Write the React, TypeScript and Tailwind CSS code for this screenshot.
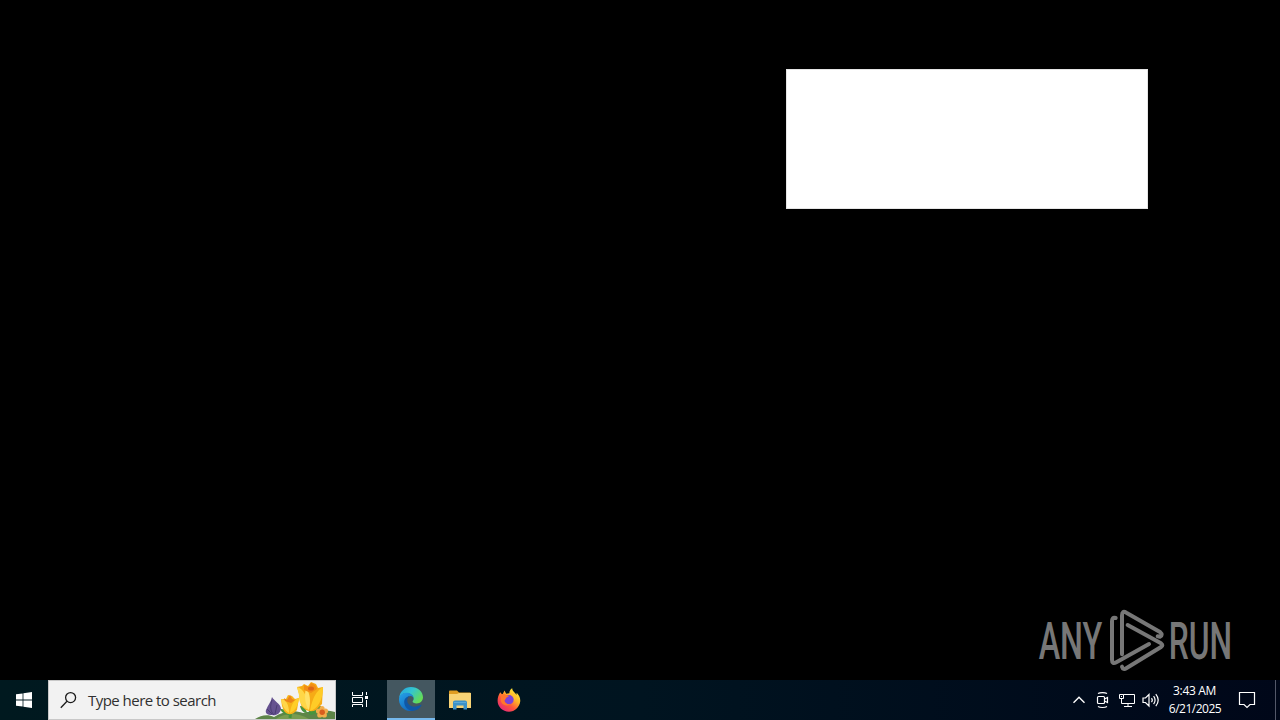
function WindowsLogo() {
    return (
        <svg className="h-4 w-4" viewBox="0 0 16 16" fill="#fff">
            <path d="M0 2.3 6.6 1.4V7.6H0ZM7.4 1.2 16 0V7.6H7.4ZM0 8.4H6.6V14.6L0 13.7ZM7.4 8.4H16V16L7.4 14.8Z" />
        </svg>
    );
}

function SearchIcon() {
    return (
        <svg className="h-[18px] w-[18px]" viewBox="0 0 18 18" fill="none" stroke="#1c1c1c" strokeWidth="1.3">
            <circle cx="10.6" cy="6.6" r="5" />
            <path d="M7 10.2.8 16.8" />
        </svg>
    );
}

function Flowers() {
    return (
        <svg className="h-[38px] w-20 shrink-0" viewBox="0 0 80 38">
            <path d="M0 38C6 34 13 33 19 36 28 30 39 29 48 32 58 29 70 28 80 31V38Z" fill="#5d8548" />
            <path d="M21 38C30 32 42 31 54 38Z" fill="#799c50" />
            <path d="M35 37C36 32 35 28 35 25M55 33C56 29 57 27 57 23" stroke="#46923d" strokeWidth="3" fill="none" />
            <path d="M36 34C32 29 29 28 25 28 27 32 31 34 36 34ZM54 34C58 27 62 25 66 25 65 31 60 34 54 34ZM52 32C51 27 48 25 45 25 46 29 48 32 52 32Z" fill="#48943d" />
            <path d="M17 16C19 20 26 23 26 28 25 33 21 35 17 34 12 34 10 32 11 29 13 24 16 21 17 16Z" fill="#65518f" />
            <path d="M17 19C15 25 15 30 19 34M12 28 17 33M22 24 20 33" stroke="#44366b" strokeWidth="0.8" fill="none" />
            <path d="M26 18 31 18 33 14 37 15 40 18 44 17 42 29C38 34 33 35 29 30L27 25Z" fill="#f7b319" />
            <path d="M26 18C31 18 34 24 34 32 29 29 27 24 26 18Z" fill="#ffd64a" />
            <path d="M44 17C40 18 36 23 35 32 40 30 43 25 44 17Z" fill="#ffce29" />
            <path d="M29 17 32 19 35 14 37 18 40 19 36 22 30 20Z" fill="#ec831a" />
            <path d="M42 6 47 5 49 3 53 5 56 1 61 3 63 7 68 6 67 23 61 29C55 32 49 29 46 24L45 16Z" fill="#f6ab16" />
            <path d="M42 6C48 7 53 16 54 29 47 27 43 20 44 14Z" fill="#ffd747" />
            <path d="M68 6C62 9 57 17 55 30 62 28 68 20 68 6Z" fill="#ffcc27" />
            <path d="M51 7C55 12 56 20 54 29 50 24 49 14 51 7Z" fill="#ffe168" />
            <path d="M49 4 54 6 56 2 60 4 62 8 56 12 49 9Z" fill="#f28d16" />
            <ellipse cx="56" cy="7.5" rx="3" ry="2" fill="#dc6617" />
            <g fill="#f2ad4c">
                <circle cx="67" cy="27.5" r="2.6" />
                <circle cx="70.5" cy="30" r="2.6" />
                <circle cx="69.3" cy="34" r="2.6" />
                <circle cx="64.8" cy="34" r="2.6" />
                <circle cx="63.5" cy="30" r="2.6" />
            </g>
            <circle cx="67.2" cy="31.2" r="2.7" fill="#d95d1e" />
        </svg>
    );
}

function TaskViewIcon() {
    return (
        <svg className="h-4 w-[18px]" viewBox="0 0 18 16" fill="none" stroke="#fff">
            <path d="M1.5 0V3.5H11.5V0M1.5 15V12.5H11.5V15M1.5 5.5H11.5V10.5H1.5ZM15.5 0V3M15.5 8V15" />
            <path d="M14 4H17V7H14Z" fill="#fff" stroke="none" />
        </svg>
    );
}

function EdgeIcon() {
    return (
        <svg className="h-6 w-6" viewBox="0 0 24 24">
            <defs>
                <linearGradient id="edgeTop" x1="0" y1="0" x2="1" y2="0.6">
                    <stop offset="0" stopColor="#249fe2" />
                    <stop offset="0.5" stopColor="#34c5cf" />
                    <stop offset="1" stopColor="#65dc54" />
                </linearGradient>
                <linearGradient id="edgeLeft" x1="0" y1="0" x2="0.6" y2="1">
                    <stop offset="0" stopColor="#26a3e9" />
                    <stop offset="1" stopColor="#1268bd" />
                </linearGradient>
            </defs>
            <path d="M.1 11C.8 4.7 5.5 0 12 0 18.8 0 24 4.8 24 10.3 24 14.1 21.2 16.4 17.7 16.4 15 16.4 13.6 15.6 13.6 14.6 13.6 13.8 14.7 13.4 14.7 11.8 14.7 9.3 12.4 6.9 8.8 6.2 5.1 5.5 1.6 7.7.1 11Z" fill="url(#edgeTop)" />
            <path d="M0 12C.2 8.4 3.4 5.8 7.7 5.8 11.8 5.8 14.8 8.6 14.7 11.7 14.5 10.2 13.1 8.9 11.4 9 8.5 9.2 6.8 11.8 7.1 15 7.4 19.1 10.4 22.3 14.8 23.7 6.8 25.6-.3 19.6 0 12Z" fill="url(#edgeLeft)" />
            <path d="M10.8 9.2C7.8 10.7 7.5 14.8 9.7 17.3 12.7 20.8 17.9 20 21.8 17.8 22.4 17.5 22.8 18 22.4 18.6 20.5 21.8 17.1 24 13.1 24 8.3 22.6 5.2 19.2 5.2 14.9 5.2 11.8 7.6 9.2 10.8 9.2Z" fill="#1057a5" />
        </svg>
    );
}

function FolderIcon() {
    return (
        <svg className="h-5 w-[22px]" viewBox="0 0 22 20">
            <path d="M0 1.7C0 .8.5.5 1 .5H8L10 2.5H20.5C21.4 2.5 22 3 22 4V17.5H0Z" fill="#df9d23" />
            <path d="M0 4H8L10 3H22V18H0Z" fill="#f8d375" />
            <path d="M4 19.5V12.5C4 11.3 4.8 10.5 6 10.5H16C17.2 10.5 18 11.3 18 12.5V19.5H14.5V15.5H7.5V19.5Z" fill="#3c92c9" />
            <path d="M5 12H17V12.8H5Z" fill="#63afdb" />
        </svg>
    );
}

function FirefoxIcon() {
    return (
        <svg className="h-6 w-6" viewBox="0 0 24 24">
            <defs>
                <linearGradient id="foxBody" x1="0.85" y1="0.1" x2="0.2" y2="0.95">
                    <stop offset="0" stopColor="#ffea38" />
                    <stop offset="0.35" stopColor="#ffb128" />
                    <stop offset="0.65" stopColor="#ff553b" />
                    <stop offset="1" stopColor="#e52978" />
                </linearGradient>
            </defs>
            <path d="M3.2 4.2 5.4 6.7 7.5 2.5 9.2 5.8 12.4 5.2C12.2 3.1 13.3 1.2 15.2.2 15.2 3.2 18.2 4.4 19.4 6.9L19.7 4.8C22 7 23.6 10.3 23.2 13.5 22.4 19.5 17.7 23.7 12 23.7 5.5 23.7.6 18.8.6 12.8.6 9.7 1.6 6.7 3.2 4.2Z" fill="url(#foxBody)" />
            <circle cx="12" cy="11.7" r="4.7" fill="#7b42d8" />
            <path d="M4.5 6.5C6.4 5.5 8.6 6.3 9.9 7.5L12 7.8C11.5 9.2 9.6 9 9 10 8.8 11.6 7.6 11.6 7.3 13 8.4 15.8 11.3 16.8 13.8 15.7 10.9 19.2 3.4 17.4 3.7 11.2Z" fill="#ff762c" />
            <path d="M13.5 5.3C16.6 6.6 17.8 10.1 16.7 12.8L19.2 9.1 17.6 5Z" fill="#ffc331" />
        </svg>
    );
}

function TrayIcons() {
    return (
        <div className="flex items-center text-white">
            <svg className="h-10 w-6" viewBox="0 0 24 40" fill="none" stroke="currentColor" strokeWidth="1.4">
                <path d="M6.5 22.8 12 17.3 17.5 22.8" />
            </svg>
            <svg className="h-10 w-6" viewBox="0 0 24 40" fill="none" stroke="currentColor" strokeWidth="1.2">
                <rect x="6.5" y="16.5" width="7" height="7" rx="1" />
                <path d="M13.5 19 16.5 17.5V22.5L13.5 21M7 13.5C9 12.2 14 12.2 16 13.5M7 26.5C9 27.8 14 27.8 16 26.5" />
            </svg>
            <svg className="h-10 w-6" viewBox="0 0 24 40" fill="none" stroke="currentColor">
                <path d="M8.5 14.5H19.5V23.5H6.5V18.5M13 23.5V26.5M9 26.5H17M4.5 14.5H8.5V18.5H4.5Z" />
                <path d="M6 16H7V17H6Z" fill="currentColor" stroke="none" />
            </svg>
            <svg className="h-10 w-6" viewBox="0 0 24 40" fill="none" stroke="currentColor" strokeWidth="1.2">
                <path d="M4 18H6.5L10 14.5V26L6.5 22.5H4ZM12.5 18.2C13.5 19.5 13.5 21 12.5 22.2M14.6 16.2C16.5 18.8 16.5 21.7 14.6 24.2M16.8 14.2C20 18.2 20 22.3 16.8 26.2" />
            </svg>
        </div>
    );
}

function Watermark() {
    return (
        <div className="absolute top-[600px] left-[1030px]">
            <svg className="h-20 w-[250px] overflow-visible" viewBox="0 0 750 240">
                <g className="font-['Roboto'] text-[155px] font-medium" fill="#777">
                    <text x="26" y="178" textLength="191" lengthAdjust="spacingAndGlyphs">ANY</text>
                    <text x="416" y="178" textLength="190" lengthAdjust="spacingAndGlyphs">RUN</text>
                </g>
                <g fill="none" stroke="#777" strokeWidth="12" strokeLinecap="round" strokeLinejoin="round">
                    <path d="M257 54Q246 50 246 64V179Q246 194 259 187L357 132" />
                    <path d="M276 163V47Q276 30 289 38L390 96Q400 105 390 110L383 109" />
                    <path d="M293 75 393 130Q401 136 393 141L290 204Q279 211 276 200" />
                </g>
            </svg>
        </div>
    );
}

export default function App() {
    return (
        <div className="relative flex h-[720px] w-[1280px] flex-col overflow-hidden bg-black">
            <main className="flex-1">
                <div className="absolute top-[69px] left-[786px] h-[140px] w-[362px] border border-[#e5e5e5] bg-white" />
                <Watermark />
            </main>

            <footer className="flex h-10 bg-linear-to-r from-[#00191f] via-[#001420] to-[#000719] font-['Open_Sans',sans-serif]">
                <div className="flex w-12 items-center justify-center">
                    <WindowsLogo />
                </div>
                <div className="flex w-72 items-center border border-[#c8c8c8] bg-[#f2f2f2] pl-[11px]">
                    <SearchIcon />
                    <span className="ml-2.5 flex-1 text-[15px] tracking-[-0.53px] whitespace-nowrap text-[#303030]">Type here to search</span>
                    <Flowers />
                </div>
                <div className="mr-[3px] flex w-12 items-center justify-center">
                    <TaskViewIcon />
                </div>
                <div className="flex w-12 items-center justify-center border-b-2 border-[#76b9ed] bg-[#445760]">
                    <EdgeIcon />
                </div>
                <div className="flex w-[49px] items-center justify-center">
                    <FolderIcon />
                </div>
                <div className="flex w-[49px] items-center justify-center">
                    <FirefoxIcon />
                </div>
                <div className="ml-auto flex">
                    <TrayIcons />
                    <div className="flex w-16 flex-col items-center pt-0.5 text-[12px] leading-[18px] tracking-[-0.5px] whitespace-nowrap text-white">
                        <span className="pr-px tracking-[-0.35px]">3:43 AM</span>
                        <span>6/21/2025</span>
                    </div>
                    <svg className="h-10 w-12" viewBox="0 0 48 40" fill="none" stroke="#fff" strokeWidth="1.2">
                        <path d="M12.5 12.5H27.5V24.5H23L20 27.5 17 24.5H12.5Z" />
                    </svg>
                    <div className="w-[5px] border-l border-[#535869]" />
                </div>
            </footer>
        </div>
    );
}
